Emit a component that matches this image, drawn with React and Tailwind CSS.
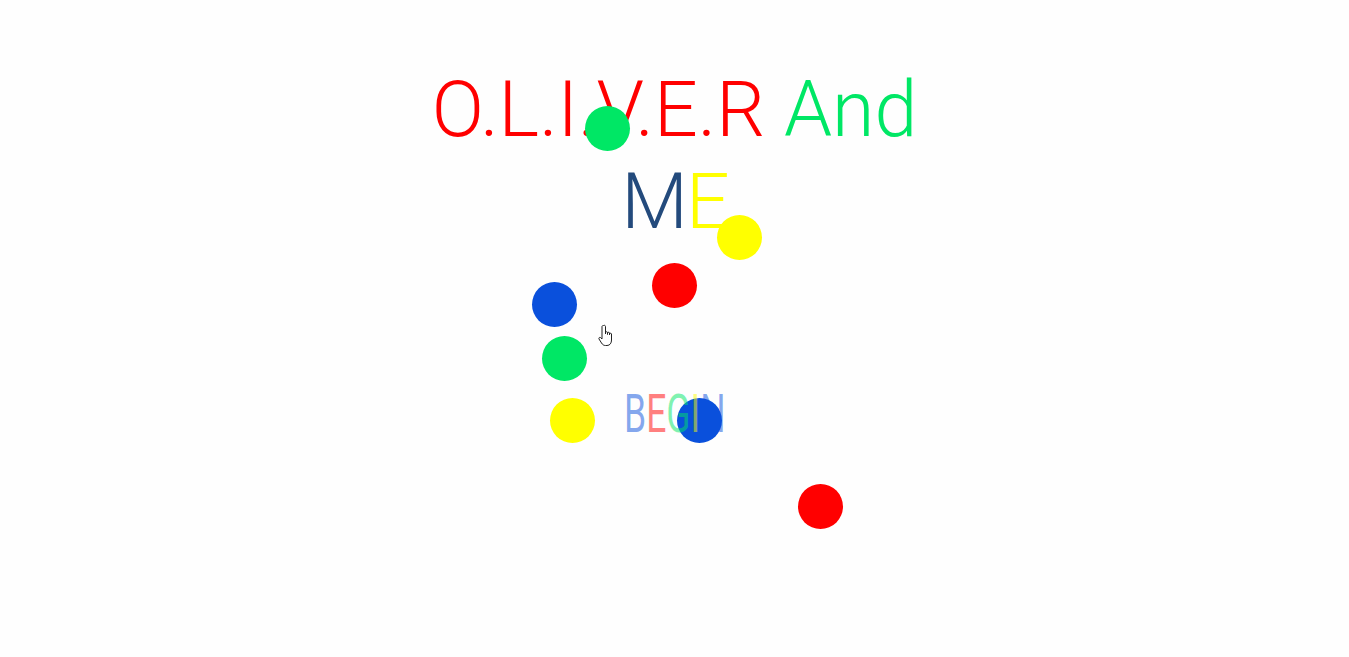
import React from "react";

const balls = [
  { x: 607, y: 128, c: "bg-[#00e765]" },
  { x: 739, y: 237, c: "bg-[#ffff00]" },
  { x: 674, y: 285, c: "bg-[#ff0000]" },
  { x: 554, y: 304, c: "bg-[#0a50dc]" },
  { x: 564, y: 358, c: "bg-[#00e765]" },
  { x: 572, y: 420, c: "bg-[#ffff00]" },
  { x: 699, y: 420, c: "bg-[#0a50dc]" },
  { x: 820, y: 506, c: "bg-[#ff0000]" },
];

export default function App() {
  return (
    <div className="relative w-full h-[657px] bg-[#fefefe] overflow-hidden" style={{ fontFamily: "Roboto, sans-serif" }}>
      <div className="flex flex-col items-center pt-[64px] text-[77px] leading-[92px] font-light">
        <div className="whitespace-nowrap">
          <span className="text-[#ff0000]">O.L.I.V.E.R</span>{" "}
          <span className="text-[#00e765]">And</span>
        </div>
        <div className="whitespace-nowrap tracking-[-2px]">
          <span className="text-[#234a7c]">M</span>
          <span className="text-[#ffff00]">E</span>
        </div>
        <div className="mt-[136px] text-[53px] leading-[60px] font-normal scale-x-[0.67] whitespace-nowrap relative z-10">
          <span className="text-[#0a50dc]/50">B</span>
          <span className="text-[#ff0000]/50">E</span>
          <span className="text-[#00e765]/50">G</span>
          <span className="text-[#ffff00]/50">I</span>
          <span className="text-[#0a50dc]/50">N</span>
        </div>
      </div>
      {balls.map((b, i) => (
        <div
          key={i}
          className={"absolute w-[45px] h-[45px] rounded-full " + b.c}
          style={{ left: b.x - 22.5, top: b.y - 22.5 }}
        />
      ))}
      <svg className="absolute left-[598px] top-[324px] z-20" width="18" height="24" viewBox="0 0 18 24">
        <path
          d="M5.5 1.5 C6.5 1 7.5 1.5 7.5 2.5 L7.5 10 L7.5 8.5 C7.5 7.5 9.5 7.5 9.5 8.5 L9.5 10.5 L9.5 9 C9.5 8 11.5 8 11.5 9 L11.5 11 L11.5 10 C11.5 9 13.5 9 13.5 10 L13.5 16 C13.5 19 12 21.5 9 21.5 L7.5 21.5 C5.5 21.5 4.5 20.5 3.5 19 L1 15 C0.5 14 1.5 13 2.5 13.5 L4 15 L4 2.5 C4 2 4.5 1.5 5.5 1.5 Z"
          fill="#fff"
          stroke="#222"
          strokeWidth="1"
        />
      </svg>
    </div>
  );
}
